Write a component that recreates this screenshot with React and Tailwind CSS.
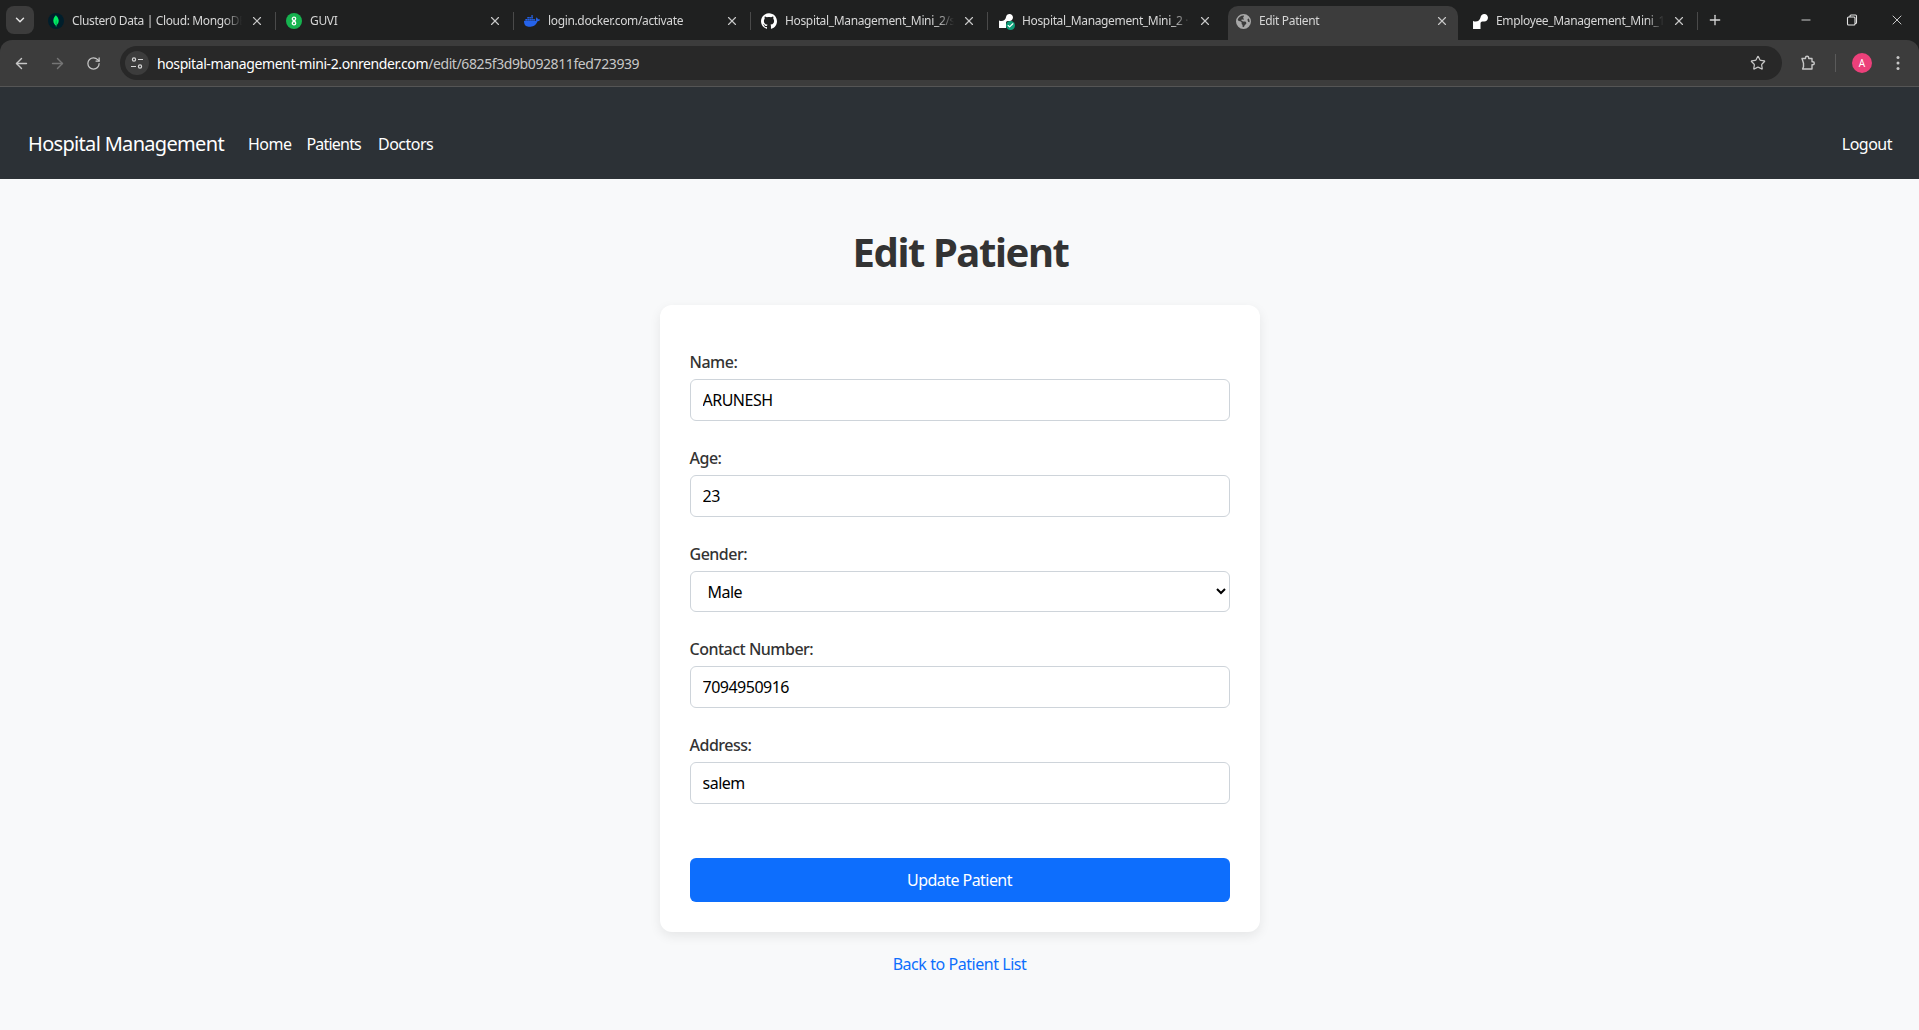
import React from "react";
import { ArrowLeft, ArrowRight, RotateCw, Star, ChevronDown, X, Plus, Minus, Check } from "lucide-react";
import { SiDocker, SiGithub, SiMongodb, SiRender } from "react-icons/si";
import { FaEarthAmericas } from "react-icons/fa6";

const font = "font-['Noto_Sans','Open_Sans',sans-serif]";

function Tab({ icon, title, sep, className }) {
    return (
        <div className={`relative h-[34px] shrink-0 flex items-center pb-[4px] ${className}`}>
            <div className="w-[16px] h-[16px] shrink-0 flex items-center justify-center">{icon}</div>
            <span className="flex-1 ml-[8px] min-w-0 overflow-hidden whitespace-nowrap text-[12px] tracking-[-0.35px] text-[#d6d6d6] [mask-image:linear-gradient(to_right,black_90%,transparent)]">
                {title}
            </span>
            <X size={14} strokeWidth={2} className="ml-[8px] shrink-0 text-[#c7c7c7]" />
            {sep && <span className="absolute right-0 top-[6px] h-[18px] w-px bg-[#4a4a4a]" />}
        </div>
    );
}

function Field({ label, value }) {
    return (
        <div className="mb-[25px]">
            <label className="block mb-[5px] text-[16px] leading-[24px] font-medium text-[#333333] tracking-[-0.5px]">{label}</label>
            <input
                readOnly
                value={value}
                className="block w-full h-[42px] px-[12px] border border-[#ced4da] rounded-[6px] bg-white text-[16px] text-black tracking-[-0.5px] outline-none"
            />
        </div>
    );
}

export default function App() {
    return (
        <div className={`${font} min-h-[1030px] bg-[#f8f9fa] flex flex-col`}>
            {/* Browser tabs */}
            <div className="h-[40px] bg-[#1f2020] flex items-end pl-[6px]">
                <div className="self-start mt-[6px] w-[28px] h-[28px] rounded-[8px] bg-[#3c3c3c] flex items-center justify-center mr-[4px] shrink-0">
                    <ChevronDown size={14} strokeWidth={2.5} className="text-[#e3e3e3]" />
                </div>
                <Tab sep className="w-[238px] pl-[10px] pr-[12px]" title="Cluster0 Data | Cloud: MongoDB Cloud" icon={<span className="w-[16px] h-[16px] rounded-full bg-[#001e2b] flex items-center justify-center"><SiMongodb size={12} className="text-[#00ed64]" /></span>} />
                <Tab sep className="w-[238px] pl-[10px] pr-[12px]" title="GUVI" icon={
                    <svg width="16" height="16" viewBox="0 0 16 16"><circle cx="8" cy="8" r="8" fill="#16b34f" /><g fill="none" stroke="#fff" strokeWidth="1.3"><circle cx="8" cy="5.8" r="1.7" /><circle cx="8" cy="10.2" r="1.7" /></g></svg>
                } />
                <Tab sep className="w-[237px] pl-[10px] pr-[12px]" title="login.docker.com/activate" icon={<SiDocker size={16} className="text-[#2563eb]" />} />
                <Tab sep className="w-[237px] pl-[10px] pr-[12px]" title="Hospital_Management_Mini_2/server" icon={<SiGithub size={16} className="text-white" />} />
                <Tab className="w-[240px] pl-[10px] pr-[16px]" title="Hospital_Management_Mini_2 · Render" icon={
                    <span className="relative">
                        <SiRender size={14} className="text-white" />
                        <span className="absolute -right-[2px] -bottom-[2px] w-[9px] h-[9px] rounded-full bg-[#0f9d78] flex items-center justify-center"><Check size={7} strokeWidth={4} className="text-white" /></span>
                    </span>
                } />
                <Tab className="w-[230px] pl-[7px] pr-[9px] rounded-t-[10px] bg-[#3c3c3c]" title="Edit Patient" icon={<FaEarthAmericas size={15} className="text-[#a8a8a8]" />} />
                <Tab sep className="w-[240px] pl-[14px] pr-[12px]" title="Employee_Management_Mini_1" icon={<SiRender size={15} className="text-white" />} />
                <Plus size={16} strokeWidth={2} className="text-[#d6d6d6] self-center ml-[9px]" />
                <div className="flex-1" />
                <div className="self-stretch flex items-center text-[#e3e3e3]">
                    <div className="w-[46px] flex justify-center"><Minus size={14} strokeWidth={1.5} /></div>
                    <div className="w-[46px] flex justify-center">
                        <svg width="12" height="12" viewBox="0 0 12 12" fill="none" stroke="currentColor" strokeWidth="1.1"><rect x="1.5" y="3" width="7.5" height="8" rx="1" /><path d="M4 3V2a1 1 0 0 1 1-1h4.5a1 1 0 0 1 1 1v6.5a1 1 0 0 1-1 1H9" /></svg>
                    </div>
                    <div className="w-[44px] flex justify-center"><X size={16} strokeWidth={1.3} /></div>
                </div>
            </div>

            {/* Browser toolbar */}
            <div className="bg-[#1f2020] shrink-0">
                <div className="h-[47px] bg-[#3c3c3c] rounded-t-[12px] border-b border-[#555555] flex items-center pl-[13px] pr-[13px]">
                    <ArrowLeft size={17} strokeWidth={2} className="text-[#c7c7c7] mr-[19px]" />
                    <ArrowRight size={17} strokeWidth={2} className="text-[#757575] mr-[20px]" />
                    <RotateCw size={15} strokeWidth={2} className="text-[#c7c7c7] mr-[19px]" />
                    <div className="flex-1 h-[34px] rounded-full bg-[#282828] flex items-center pl-[5px] pr-[16px]">
                        <div className="w-[24px] h-[24px] rounded-full bg-[#3c3c3c] flex items-center justify-center">
                            <svg width="14" height="14" viewBox="0 0 14 14" fill="none" stroke="#d6d6d6" strokeWidth="1.2"><circle cx="4" cy="3.5" r="1.6" /><path d="M8 3.5h5M1 10.5h5" /><circle cx="10" cy="10.5" r="1.6" /></svg>
                        </div>
                        <div className="flex-1 ml-[8px] text-[14px] tracking-[-0.4px] text-white whitespace-nowrap">
                            hospital-management-mini-2.onrender.com<span className="text-[#c7c7c7]">/edit/6825f3d9b092811fed723939</span>
                        </div>
                        <Star size={16} strokeWidth={1.8} className="text-[#c7c7c7]" />
                    </div>
                    <svg width="18" height="18" viewBox="0 0 18 18" fill="none" stroke="#c7c7c7" strokeWidth="1.4" strokeLinejoin="round" className="ml-[17px]">
                        <path d="M3 4.5h3.5V3.8a1.6 1.6 0 0 1 3.2 0v.7h3.3v3.3h.8a1.5 1.5 0 0 1 0 3h-.8V15H3.6l.9-2.2V9.2z" />
                    </svg>
                    <span className="w-px h-[18px] bg-[#5a5a5a] ml-[18px]" />
                    <div className="w-[20px] h-[20px] ml-[16px] rounded-full bg-[#ec407a] text-white text-[10px] flex items-center justify-center">A</div>
                    <svg width="4" height="16" viewBox="0 0 4 16" fill="#c7c7c7" className="ml-[24px] mr-[6px]"><circle cx="2" cy="2.5" r="1.5" /><circle cx="2" cy="8" r="1.5" /><circle cx="2" cy="13.5" r="1.5" /></svg>
                </div>
            </div>

            {/* Navbar */}
            <nav className="h-[92px] shrink-0 bg-[#2c3136] flex items-center pl-[28px] pr-[27px] pt-[21px] text-[16px] tracking-[-0.5px] text-white">
                <a className="text-[20px] tracking-[-0.68px] mr-[24px]">Hospital Management</a>
                <a className="mr-[15px]">Home</a>
                <a className="mr-[17px] tracking-[-0.8px]">Patients</a>
                <a>Doctors</a>
                <a className="ml-auto">Logout</a>
            </nav>

            {/* Content */}
            <main className="flex flex-col items-center pt-[49px]">
                <h1 className="text-[40px] leading-[48px] font-bold text-[#333333] tracking-[-1.4px] mb-[29px] ml-[2px]">Edit Patient</h1>
                <div className="w-[600px] bg-white rounded-[12px] shadow-[0_4px_12px_rgba(0,0,0,0.08)] px-[30px] pt-[45px] pb-[30px]">
                    <Field label="Name:" value="ARUNESH" />
                    <Field label="Age:" value="23" />
                    <div className="mb-[25px]">
                        <label className="block mb-[5px] text-[16px] leading-[24px] font-medium text-[#333333] tracking-[-0.5px]">Gender:</label>
                        <select defaultValue="Male" className="block w-full h-[41px] pl-[13px] pr-[12px] border border-[#ced4da] rounded-[6px] bg-white text-[16px] text-black tracking-[-0.5px] outline-none">
                            <option>Male</option>
                            <option>Female</option>
                        </select>
                    </div>
                    <Field label="Contact Number:" value="7094950916" />
                    <Field label="Address:" value="salem" />
                    <button className="w-full h-[44px] mt-[29px] rounded-[6px] bg-[#0d6efd] text-white text-[16px] tracking-[-0.55px]">Update Patient</button>
                </div>
                <a className="mt-[20px] text-[16px] leading-[24px] text-[#0d6efd] tracking-[-0.45px]">Back to Patient List</a>
            </main>
        </div>
    );
}
